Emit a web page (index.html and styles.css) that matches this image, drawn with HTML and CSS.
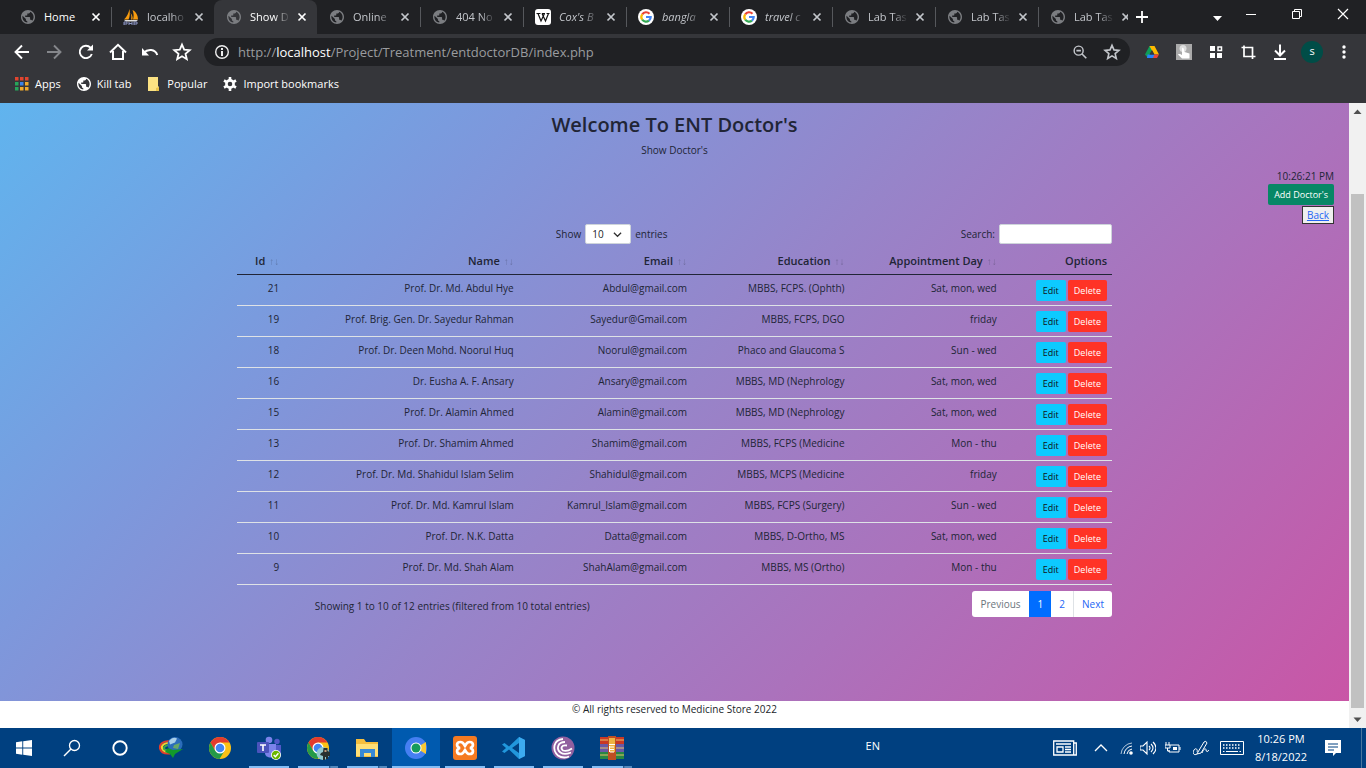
FILE: index.html
```html
<!DOCTYPE html>
<html lang="en">
<head>
<meta charset="utf-8">
<meta name="viewport" content="width=device-width, initial-scale=1">
<title>Show Doctor's</title>
<link rel="stylesheet" href="styles.css">
</head>
<body>
<svg class="sprite" aria-hidden="true">
  <symbol id="globe" viewBox="2 2 20 20"><path fill="currentColor" d="M12 2C6.480 2 2 6.480 2 12s4.480 10 10 10 10-4.480 10-10S17.520 2 12 2zm-1 17.930c-3.950-.490-7-3.850-7-7.930 0-.620.080-1.210.210-1.790L9 15v1c0 1.100.900 2 2 2v1.930zm6.900-2.540c-.260-.810-1-1.390-1.900-1.390h-1v-3c0-.550-.450-1-1-1H8v-2h2c.550 0 1-.450 1-1V7h2c1.100 0 2-.900 2-2v-.410c2.930 1.190 5 4.060 5 7.410 0 2.080-.800 3.970-2.100 5.390z"/></symbol>
  <symbol id="close" viewBox="0 0 10 10"><path d="M1.500 1.500l7 7M8.500 1.500l-7 7" stroke="currentColor" stroke-width="1.700"/></symbol>
  <symbol id="google" viewBox="0 0 16 16"><circle cx="8" cy="8" r="8" fill="#fff"/><g fill="none" stroke-width="2.200"><path d="M4.200 5.300A4.700 4.700 0 0 1 11.500 4.700" stroke="#ea4335"/><path d="M4.200 10.700A4.700 4.700 0 0 1 4.200 5.300" stroke="#fbbc05"/><path d="M11 11.600A4.700 4.700 0 0 1 4.200 10.700" stroke="#34a853"/><path d="M8 8h4.700A4.700 4.700 0 0 1 11 11.600" stroke="#4285f4"/></g></symbol>
  <symbol id="star" viewBox="0 0 20 20"><path d="M10 2.600l2.200 5.100 5.500.5-4.200 3.600 1.300 5.400-4.800-2.900-4.800 2.900 1.300-5.400-4.200-3.600 5.500-.5z" fill="none" stroke="currentColor" stroke-width="1.800"/></symbol>
  <symbol id="chrome" viewBox="0 0 24 24"><circle cx="12" cy="12" r="11" fill="#fbc116"/><path d="M2.500 6.500A11 11 0 0 1 21.500 6.500H12L7.200 14.700z" fill="#e33b2e"/><path d="M2.500 6.500A11 11 0 0 0 11.500 23l5.200-8.500-4.700 2.800-4.800-2.600z" fill="#249a48"/><circle cx="12" cy="12" r="5.500" fill="#fff"/><circle cx="12" cy="12" r="4.300" fill="#4285f4"/></symbol>
</svg>

<header class="browser">
  <nav class="tabs" aria-label="Tabs">
    <div class="tab tab-bright"><svg class="favicon"><use href="#globe"/></svg><a class="tab-title" href="#home">Home</a><button class="tab-close" aria-label="Close Home"><svg><use href="#close"/></svg></button></div>
    <div class="tab tab-divided"><svg class="favicon favicon-large" viewBox="0 0 16 16"><path d="M6.500 0c.5 4 .5 8-1 10.500H1C4 8 5.500 4 6.500 0zM9.500 1c4 2 5.500 6 5.500 9.500h-5c1-3 .8-6-.5-9.500zM7.500 4c1 2 1 4.500.5 6.500h1.500c.5-3-.5-5-2-6.500z" fill="#f89c0e"/><path d="M1 11h14l-2 1.500H3z" fill="#ddd"/><path d="M1 16v-3h3v2H1m5 1v-3m0 1.500h3m0-1.500v3m2 0v-3h3v2h-3" fill="none" stroke="#8c96c4"/></svg><a class="tab-title" href="#db">localho</a><button class="tab-close" aria-label="Close localhost"><svg><use href="#close"/></svg></button></div>
    <div class="tab tab-active tab-bright"><svg class="favicon"><use href="#globe"/></svg><a class="tab-title" href="#show">Show D</a><button class="tab-close" aria-label="Close Show"><svg><use href="#close"/></svg></button></div>
    <div class="tab"><svg class="favicon"><use href="#globe"/></svg><a class="tab-title" href="#online">Online</a><button class="tab-close" aria-label="Close Online"><svg><use href="#close"/></svg></button></div>
    <div class="tab tab-divided"><svg class="favicon"><use href="#globe"/></svg><a class="tab-title" href="#404">404 No</a><button class="tab-close" aria-label="Close 404"><svg><use href="#close"/></svg></button></div>
    <div class="tab tab-divided"><svg class="favicon favicon-large" viewBox="0 0 16 16"><rect width="16" height="16" rx="3" fill="#fff"/><path d="M1.500 4.500h4M7 4.500h3M11.500 4.500h3" stroke="#111"/><path d="M3 4.500l3 7.500 3.500-7.500M7 4.500l3.500 7.500 3-7.500" fill="none" stroke="#111" stroke-width="1.200"/></svg><a class="tab-title tab-italic" href="#cox">Cox's B</a><button class="tab-close" aria-label="Close Cox's"><svg><use href="#close"/></svg></button></div>
    <div class="tab tab-divided"><svg class="favicon favicon-large"><use href="#google"/></svg><a class="tab-title tab-italic" href="#bangla">bangla</a><button class="tab-close" aria-label="Close bangla"><svg><use href="#close"/></svg></button></div>
    <div class="tab tab-divided"><svg class="favicon favicon-large"><use href="#google"/></svg><a class="tab-title tab-italic" href="#travel">travel c</a><button class="tab-close" aria-label="Close travel"><svg><use href="#close"/></svg></button></div>
    <div class="tab tab-divided"><svg class="favicon"><use href="#globe"/></svg><a class="tab-title" href="#lab1">Lab Tas</a><button class="tab-close" aria-label="Close Lab Task"><svg><use href="#close"/></svg></button></div>
    <div class="tab tab-divided"><svg class="favicon"><use href="#globe"/></svg><a class="tab-title" href="#lab2">Lab Tas</a><button class="tab-close" aria-label="Close Lab Task"><svg><use href="#close"/></svg></button></div>
    <div class="tab tab-divided tab-last"><svg class="favicon"><use href="#globe"/></svg><a class="tab-title" href="#lab3">Lab Tas</a><button class="tab-close" aria-label="Close Lab Task"><svg><use href="#close"/></svg></button></div>
    <button class="new-tab" aria-label="New tab"><svg viewBox="0 0 12 12"><path d="M6 0v12M0 6h12" stroke="currentColor" stroke-width="1.800"/></svg></button>
    <div class="window-controls">
      <button class="tab-search" aria-label="Search tabs"><svg viewBox="0 0 16 16"><path d="M4 7h9l-4.500 5z" fill="#fff"/></svg></button>
      <button aria-label="Minimize"><svg viewBox="0 0 16 16"><path d="M3 8.500h10" stroke="#fff"/></svg></button>
      <button aria-label="Restore"><svg viewBox="0 0 16 16"><path d="M3.500 5.500h7v7h-7zM5.500 5.500v-2h7v7h-2" fill="none" stroke="#fff"/></svg></button>
      <button aria-label="Close window"><svg viewBox="0 0 16 16"><path d="M3 3l10 10M13 3L3 13" stroke="#fff" stroke-width="1.200"/></svg></button>
    </div>
  </nav>

  <div class="toolbar">
    <div class="tool-group">
      <button aria-label="Back"><svg viewBox="0 0 20 20"><path d="M17 10H4M10 3.500L3.500 10l6.500 6.500" fill="none" stroke="currentColor" stroke-width="1.900"/></svg></button>
      <button class="dim" aria-label="Forward"><svg viewBox="0 0 20 20"><path d="M3 10h13M10 3.500l6.500 6.500-6.500 6.500" fill="none" stroke="currentColor" stroke-width="1.900"/></svg></button>
      <button aria-label="Reload"><svg viewBox="0 0 20 20"><path d="M15.800 12A6.200 6.200 0 1 1 14.500 5.700L16 7.500" fill="none" stroke="currentColor" stroke-width="1.900"/><path d="M17 2.500v6h-6z" fill="currentColor"/></svg></button>
      <button aria-label="Home"><svg viewBox="0 0 20 20"><path d="M2 10.500L10 2.800l8 7.700M5 9v8h10V9" fill="none" stroke="currentColor" stroke-width="2"/></svg></button>
      <button aria-label="Undo"><svg viewBox="0 0 20 20"><path d="M3.500 11C8 6.500 15 7 17.300 13" fill="none" stroke="currentColor" stroke-width="2"/><path d="M2 6v7.500h7z" fill="currentColor"/></svg></button>
      <button aria-label="Favorites"><svg><use href="#star"/></svg></button>
    </div>
    <div class="address">
      <svg class="info-icon" viewBox="0 0 16 16"><circle cx="8" cy="8" r="6.300" fill="none" stroke="#eee" stroke-width="1.400"/><path d="M8 7v5M8 4v2" stroke="#eee" stroke-width="2"/></svg>
      <a class="url" href="#show">http://<span class="host">localhost</span>/Project/Treatment/entdoctorDB/index.php</a>
      <button aria-label="Zoom"><svg viewBox="0 0 20 20"><circle cx="8.500" cy="8.500" r="5" fill="none" stroke="currentColor" stroke-width="1.600"/><path d="M12 12l5 5M6 8.500h5" stroke="currentColor" stroke-width="1.800"/></svg></button>
      <button aria-label="Bookmark page"><svg><use href="#star"/></svg></button>
    </div>
    <div class="tool-group">
      <button aria-label="Drive"><svg viewBox="0 0 20 20"><path d="M7.500 4h5L6 16l-3-3.500z" fill="#0f9d58"/><path d="M7.500 4h5l4.500 8.500h-5z" fill="#ffba00"/><path d="M5.500 12.500H14L12 16H5z" fill="#2684fc"/><path d="M12.500 12.500H17L15 16h-4z" fill="#ea4335"/><path d="M10 8l-2.500 4.500h5z" fill="#35363a"/></svg></button>
      <button aria-label="Touch extension"><svg viewBox="0 0 20 20"><path d="M2 2h16v16H2z" fill="#aaa"/><circle cx="9" cy="6.500" r="3.500" fill="#ddd"/><path d="M8 6c2-1 2 2 2.500 4l5 1.500v5H8l-4-4c1-1 3 0 4 .5z" fill="#fff"/></svg></button>
      <button aria-label="Extensions"><svg viewBox="0 0 20 20"><path d="M4 4h5v5H4zM4 11h5v5H4zM11 11h5v5h-5z" fill="currentColor"/><path d="M12 5h3.500v3.500H12z" fill="none" stroke="currentColor" stroke-width="1.500"/></svg></button>
      <button aria-label="Crop"><svg viewBox="0 0 20 20"><path d="M3.500 5.500h11v11.500M6 3.500v11h11.500" fill="none" stroke="currentColor" stroke-width="1.700"/></svg></button>
      <button aria-label="Downloads"><svg viewBox="0 0 20 20"><path d="M10 2.500v11M5 8.500l5 5 5-5M4 17h12" fill="none" stroke="currentColor" stroke-width="2"/></svg></button>
      <button aria-label="Profile"><span class="avatar">s</span></button>
      <button aria-label="Menu"><svg viewBox="0 0 20 20"><g fill="currentColor"><circle cx="10" cy="5" r="1.700"/><circle cx="10" cy="10" r="1.700"/><circle cx="10" cy="15" r="1.700"/></g></svg></button>
    </div>
  </div>

  <nav class="bookmarks" aria-label="Bookmarks">
    <a href="#apps"><svg viewBox="0 0 14 14"><path d="M0 0h3.500v3.500H0zM5 0h3.500v3.500H5zM10 0h3.500v3.500H10z" fill="#e2452f"/><path d="M0 5h3.500v3.500H0zM0 10h3.500v3.500H0z" fill="#27a55a"/><path d="M5 5h3.500v3.500H5z" fill="#3b82e8"/><path d="M10 5h3.500v3.500H10zM5 10h3.500v3.500H5zM10 10h3.500v3.500H10z" fill="#f0a92c"/></svg>Apps</a>
    <a href="#kill"><svg><use href="#globe"/></svg>Kill tab</a>
    <a href="#popular"><svg viewBox="0 0 14 14"><path d="M1 0h10v9l1 1v4H1z" fill="#fbe283"/><path d="M9 14v-3l3-1v4z" fill="#e8c34c"/></svg>Popular</a>
    <a href="#import"><svg viewBox="0 0 14 14"><circle cx="7" cy="7" r="3.600" fill="none" stroke="#fff" stroke-width="2.600"/><path d="M7 0v3M7 11v3M1 3.500l2.500 1.400M10.500 9.100L13 10.500M1 10.500l2.500-1.400M10.500 4.900L13 3.500" stroke="#fff" stroke-width="2.600"/></svg>Import bookmarks</a>
  </nav>
</header>

<div class="viewport">
  <div class="page">
    <main class="content">
      <h1>Welcome To ENT Doctor's</h1>
      <p class="subtitle">Show Doctor's</p>
      <div class="actions">
        <time>10:26:21 PM</time>
        <button class="btn btn-add">Add Doctor's</button>
        <a class="back" href="#back">Back</a>
      </div>
      <section class="listing">
        <div class="controls">
          <div class="half length"><label for="length">Show</label><select id="length"><option>10</option><option>25</option></select><span>entries</span></div>
          <div class="half filter"><label for="search">Search:</label><input id="search" type="search"></div>
        </div>
        <table>
          <colgroup><col class="col-id"><col class="col-name"><col class="col-email"><col class="col-education"><col class="col-day"><col class="col-options"></colgroup>
          <thead><tr><th>Id<span class="sort">↑↓</span></th><th>Name<span class="sort">↑↓</span></th><th>Email<span class="sort">↑↓</span></th><th>Education<span class="sort">↑↓</span></th><th>Appointment Day<span class="sort">↑↓</span></th><th>Options</th></tr></thead>
          <tbody>
            <tr><td>21</td><td>Prof. Dr. Md. Abdul Hye</td><td>Abdul@gmail.com</td><td>MBBS, FCPS. (Ophth)</td><td>Sat, mon, wed</td><td><div class="options"><button class="btn btn-edit">Edit</button><button class="btn btn-delete">Delete</button></div></td></tr>
            <tr><td>19</td><td>Prof. Brig. Gen. Dr. Sayedur Rahman</td><td>Sayedur@Gmail.com</td><td>MBBS, FCPS, DGO</td><td>friday</td><td><div class="options"><button class="btn btn-edit">Edit</button><button class="btn btn-delete">Delete</button></div></td></tr>
            <tr><td>18</td><td>Prof. Dr. Deen Mohd. Noorul Huq</td><td>Noorul@gmail.com</td><td>Phaco and Glaucoma S</td><td>Sun - wed</td><td><div class="options"><button class="btn btn-edit">Edit</button><button class="btn btn-delete">Delete</button></div></td></tr>
            <tr><td>16</td><td>Dr. Eusha A. F. Ansary</td><td>Ansary@gmail.com</td><td>MBBS, MD (Nephrology</td><td>Sat, mon, wed</td><td><div class="options"><button class="btn btn-edit">Edit</button><button class="btn btn-delete">Delete</button></div></td></tr>
            <tr><td>15</td><td>Prof. Dr. Alamin Ahmed</td><td>Alamin@gmail.com</td><td>MBBS, MD (Nephrology</td><td>Sat, mon, wed</td><td><div class="options"><button class="btn btn-edit">Edit</button><button class="btn btn-delete">Delete</button></div></td></tr>
            <tr><td>13</td><td>Prof. Dr. Shamim Ahmed</td><td>Shamim@gmail.com</td><td>MBBS, FCPS (Medicine</td><td>Mon - thu</td><td><div class="options"><button class="btn btn-edit">Edit</button><button class="btn btn-delete">Delete</button></div></td></tr>
            <tr><td>12</td><td>Prof. Dr. Md. Shahidul Islam Selim</td><td>Shahidul@gmail.com</td><td>MBBS, MCPS (Medicine</td><td>friday</td><td><div class="options"><button class="btn btn-edit">Edit</button><button class="btn btn-delete">Delete</button></div></td></tr>
            <tr><td>11</td><td>Prof. Dr. Md. Kamrul Islam</td><td>Kamrul_Islam@gmail.com</td><td>MBBS, FCPS (Surgery)</td><td>Sun - wed</td><td><div class="options"><button class="btn btn-edit">Edit</button><button class="btn btn-delete">Delete</button></div></td></tr>
            <tr><td>10</td><td>Prof. Dr. N.K. Datta</td><td>Datta@gmail.com</td><td>MBBS, D-Ortho, MS</td><td>Sat, mon, wed</td><td><div class="options"><button class="btn btn-edit">Edit</button><button class="btn btn-delete">Delete</button></div></td></tr>
            <tr><td>9</td><td>Prof. Dr. Md. Shah Alam</td><td>ShahAlam@gmail.com</td><td>MBBS, MS (Ortho)</td><td>Mon - thu</td><td><div class="options"><button class="btn btn-edit">Edit</button><button class="btn btn-delete">Delete</button></div></td></tr>
          </tbody>
        </table>
        <div class="table-footer">
          <p class="half info">Showing 1 to 10 of 12 entries (filtered from 10 total entries)</p>
          <nav class="half pager" aria-label="Pages"><div class="pages"><a class="disabled" href="#prev">Previous</a><a class="current" href="#p1">1</a><a href="#p2">2</a><a href="#next">Next</a></div></nav>
        </div>
      </section>
    </main>
    <footer class="copyright">© All rights reserved to Medicine Store 2022</footer>
  </div>
  <div class="scrollbar" aria-hidden="true">
    <svg viewBox="0 0 17 17"><path d="M4.500 11h8l-4-4.500z" fill="#505050"/></svg>
    <div class="thumb"></div>
    <svg viewBox="0 0 17 17"><path d="M4.500 6.500h8l-4 4.500z" fill="#505050"/></svg>
  </div>
</div>

<footer class="taskbar">
  <div class="launchers">
    <button aria-label="Start"><svg viewBox="0 0 24 24"><path d="M4 6.300l6.300-1v6.200H4zM11.200 5.200L20 4v7.500h-8.800zM4 12.500h6.300v6.300L4 17.800zM11.200 12.500H20V20l-8.800-1.200z" fill="#fff"/></svg></button>
    <button aria-label="Search"><svg viewBox="0 0 24 24"><circle cx="14.500" cy="9.500" r="5" fill="none" stroke="#fff" stroke-width="1.300"/><path d="M11 13l-7 7" stroke="#fff" stroke-width="1.400"/></svg></button>
    <button aria-label="Cortana"><svg viewBox="0 0 24 24"><circle cx="12" cy="12" r="6.700" fill="none" stroke="#fff" stroke-width="1.900"/></svg></button>
  </div>
  <div class="launchers apps">
    <button aria-label="Download manager"><svg viewBox="0 0 24 24"><path d="M12 5.500C5 4 0 8 1 12.500c1 4 5 5.500 10 5" fill="none" stroke="#e33c2b" stroke-width="2"/><path d="M12 7.200C6 6 2 9.500 3 12.500c1 3 4 3.500 8 3.500" fill="none" stroke="#f5d22d" stroke-width="2"/><path d="M12 9C8 8.500 4.500 10.500 5 12.500c.5 2 3 2 6 2" fill="none" stroke="#3aa64a" stroke-width="2"/><circle cx="16" cy="8.500" r="7.500" fill="#2b6cba"/><path d="M10 5c3-4 6-3.500 8-2.500l-2 4-5 2z" fill="#a9cfe8"/><path d="M15 9l6-2-2 6-5-1z" fill="#67a866"/><path d="M9 12l5 2 10-1-8 5-2 4-3-4-5-2z" fill="#129a2a"/></svg></button>
    <button aria-label="Chrome"><svg><use href="#chrome"/></svg></button>
    <button class="running" aria-label="Teams"><svg viewBox="0 0 24 24"><circle cx="12" cy="4" r="3.300" fill="#7b83eb"/><circle cx="20" cy="5.500" r="2.700" fill="#5059c9"/><path d="M16 9h8v7c0 3-4 5-8 3z" fill="#5059c9"/><path d="M8 8h11v9c0 6-11 6-11 0z" fill="#7b83eb"/><rect y="6" width="12" height="11" rx="1" fill="#4b53bc"/><path d="M3 9h6M6 9v6" stroke="#fff" stroke-width="1.600"/><circle cx="19" cy="19" r="5" fill="#fff"/><circle cx="19" cy="19" r="4.200" fill="#6bb700"/><path d="M16.700 19l1.700 1.800 3-3.600" fill="none" stroke="#fff" stroke-width="1.400"/></svg></button>
    <button class="running stacked" aria-label="Chrome profile"><svg viewBox="0 0 24 24"><use href="#chrome"/><circle cx="17" cy="17.500" r="6.500" fill="#92c9cf"/><path d="M17.500 12h4v3l2.500 1v4h-2v3h-2v-2h-1v3h-2v-4l-3-1 1-2 2-1z" fill="#28302f"/><path d="M18.500 14h2v2h-2z" fill="#c49a7a"/></svg></button>
    <button class="running stacked" aria-label="File Explorer"><svg viewBox="0 0 24 24"><path d="M1 3h8l2 3h12v15H1z" fill="#f5be3e"/><path d="M1 8h22v12H1z" fill="#ffdf76"/><path d="M5 13h15v8h-4v-4H9v4H5z" fill="#3889d6"/></svg></button>
    <button class="running focused" aria-label="Browser"><svg viewBox="0 0 24 24"><circle cx="12" cy="12" r="11" fill="#457ff2"/><path d="M12 12l10-6v12z" fill="#f8c834"/><circle cx="12" cy="12" r="5.500" fill="#fff"/><circle cx="12" cy="12" r="4.500" fill="#159b5d"/></svg></button>
    <button class="running" aria-label="XAMPP"><svg viewBox="0 0 24 24"><rect width="24" height="24" rx="3" fill="#f57a21"/><path d="M7.500 6C3 6 3 11 7 12c-4 1-4 6 .5 6 3 0 3-2 4.500-4 1.500 2 1.500 4 4.500 4 4.500 0 4.500-5 .5-6 4-1 4-6-.5-6-3 0-3 2-4.500 4-1.500-2-1.500-4-4.500-4z" fill="none" stroke="#fff" stroke-width="2.700"/></svg></button>
    <button class="running" aria-label="Visual Studio Code"><svg viewBox="0 0 24 24"><path d="M17 1l6 3v16l-6 3L7 13.500 2.500 17 0 15.500 4 12 0 8.500 2.500 7 7 10.500zM17 7l-7 5 7 5z" fill="#2197dc" fill-rule="evenodd"/><path d="M17 1l6 3v16l-6 3z" fill="#3cabf0"/></svg></button>
    <button class="running" aria-label="BitTorrent"><svg viewBox="0 0 24 24"><circle cx="12" cy="12" r="11.500" fill="#91609f"/><g fill="none" stroke="#fff" stroke-width="1.800"><path d="M12 3C2 4 1 14 7 19.500c4 3 9 2 11 1"/><path d="M14 6C6.500 6 5 13 9.500 16.500c4 3 8 1 10.500 0"/><path d="M16 9.500c-6-1-6.500 3-4 5 3 1 6 0 9-2"/></g></svg></button>
    <button class="running stacked" aria-label="WinRAR"><svg viewBox="0 0 24 24"><path d="M0 1h24v7H0z" fill="#c93824"/><path d="M0 8h24v8H0z" fill="#6958a5"/><path d="M0 16h24v7H0z" fill="#288743"/><path d="M0 4h24M0 12h24M0 19h24" stroke="#e5c16a"/><path d="M8 0h8v24H8z" fill="#bd4f22"/><path d="M9 2h6v14H9z" fill="#eeb343"/><path d="M9 8.500h6M10 11h4M10 13.500h4M10 16h4M9.500 10v6" stroke="#fff"/></svg></button>
  </div>
  <span class="language">EN</span>
  <div class="tray">
    <button class="tray-news" aria-label="News"><svg viewBox="0 0 24 18"><path d="M.7 2h20v14H.7zM20.700 4h2.600v12h-3M3 5h15M4 8h6v5H4zM12 8h6M12 10.500h6M12 13h6" fill="none" stroke="#fff" stroke-width="1.300"/></svg></button>
    <button class="tray-wide" aria-label="Hidden icons"><svg viewBox="0 0 16 16"><path d="M2 11l6-6 6 6" fill="none" stroke="#fff" stroke-width="1.300"/></svg></button>
    <button class="tray-small" aria-label="Wi-Fi"><svg viewBox="0 0 16 16"><g fill="none" stroke="#fff"><path d="M3 14A12 12 0 0 1 14 3" opacity=".7"/><path d="M6 14A9 9 0 0 1 14 6"/><path d="M9 14A6 6 0 0 1 14 9"/></g><circle cx="13" cy="13" r="1.800" fill="#fff"/></svg></button>
    <button class="tray-small" aria-label="Volume"><svg viewBox="0 0 16 16"><path d="M0 6h3l4-4v12l-4-4H0zM9 6q2 2 0 4M11 4q4 4 0 8M13 2q6 6 0 12" fill="none" stroke="#fff" stroke-width="1.100"/></svg></button>
    <button class="tray-wide" aria-label="Battery"><svg viewBox="0 0 16 16"><path d="M5 5h9v7H4v-2M15 7v3M1 2v3M4 2v3M0 5h5v3H0zM2.500 8v3H5" fill="none" stroke="#fff"/><path d="M8 7h4v3H8z" fill="#fff"/></svg></button>
    <button class="tray-wide" aria-label="Pen"><svg viewBox="0 0 16 16"><path d="M4 14C1 16-1 13 1 10s4 0 3 2M5 12L11 2q2-2 3 1L8 13l-4 1zM9 13c2-5 4-5 4-3s2 2 3 0" fill="none" stroke="#fff"/></svg></button>
    <button class="tray-keyboard" aria-label="Keyboard"><svg viewBox="0 0 24 14"><path d="M.5.500h23v13H.500z" fill="none" stroke="#fff"/><path d="M3 4h18M3 7h18" stroke="#fff" stroke-width="1.500" stroke-dasharray="1.500 1.500"/><path d="M6 10.500h12M3 10.500h1.500M19.500 10.500H21" stroke="#fff"/></svg></button>
    <time class="clock">10:26 PM<br>8/18/2022</time>
    <button class="tray-notice" aria-label="Notifications"><svg viewBox="0 0 16 16"><path d="M0 0h16v13h-5l-3 3v-3H0z" fill="#fff"/><path d="M3 4h10M3 7h10M3 10h6" stroke="#004080"/></svg></button>
  </div>
</footer>
</body>
</html>
```
FILE: styles.css
```css
* { box-sizing: border-box; }

body {
  display: flex;
  flex-direction: column;
  height: 100vh;
  margin: 0;
  overflow: hidden;
  color: #212536;
  font-family: "Open Sans", "Noto Sans", sans-serif;
  font-size: 11px;
  line-height: 16px;
}

button, input, select { font: inherit; }
button { padding: 0; border: 0; background: none; color: inherit; }
a { color: inherit; text-decoration: none; }
h1, p { margin: 0; }
svg { display: block; flex: none; }
.sprite { position: absolute; width: 0; height: 0; }

/* Browser frame */
.browser { flex: none; background: #35363a; color: #fff; }
.tabs { display: flex; height: 34px; padding-left: 8px; background: #202124; }
.tab {
  position: relative;
  display: flex;
  flex: 0 1 103px;
  align-items: center;
  min-width: 0;
  padding-left: 13px;
  color: #c3c6cb;
}
.tab-bright { color: #fff; }
.tab-active { border-radius: 8px 8px 0 0; background: #35363a; }
.tab-divided::before {
  content: "";
  position: absolute;
  left: 0;
  width: 1px;
  height: 20px;
  background: #56585c;
}
.tab-last { flex-basis: 90px; overflow: hidden; }
.favicon { width: 14px; height: 14px; margin-right: 9px; color: #7b7d81; }
.favicon-large { width: 16px; height: 16px; margin-right: 8px; margin-left: -1px; }
.tab-title {
  flex: none;
  width: 40px;
  white-space: nowrap;
  -webkit-mask-image: linear-gradient(90deg, #000 60%, transparent);
  mask-image: linear-gradient(90deg, #000 60%, transparent);
}
.tab-bright:first-child .tab-title { -webkit-mask-image: none; mask-image: none; }
.tab-italic { font-style: italic; }
.tab-close { flex: none; margin-left: 7px; }
.tab-close svg { width: 10px; height: 10px; }
.new-tab { margin-left: 8px; }
.new-tab svg { width: 12px; height: 12px; }
.window-controls { display: flex; align-items: center; margin-left: auto; padding-bottom: 6px; }
.window-controls button { display: grid; width: 46px; place-items: center; }
.window-controls .tab-search { width: 22px; padding-top: 6px; }
.window-controls svg { width: 16px; height: 16px; }

.toolbar { display: flex; gap: 6px; align-items: center; height: 36px; padding: 0 6px; }
.tool-group { display: flex; }
.tool-group button { display: grid; width: 32px; height: 32px; place-items: center; }
.tool-group svg { width: 20px; height: 20px; }
.tool-group .dim { color: #85878b; }
.address {
  display: flex;
  flex: 1;
  align-items: center;
  height: 28px;
  padding: 0 8px 0 10px;
  border-radius: 14px;
  background: #202124;
}
.info-icon { width: 16px; height: 16px; margin-right: 8px; }
.url { flex: 1; color: #9a9c9f; font-size: 13px; }
.host { color: #fff; }
.address button { margin-left: 12px; color: #c3c6cb; }
.address button svg { width: 20px; height: 18px; }
.avatar { width: 22px; height: 22px; border-radius: 11px; background: #004d47; line-height: 20px; }
.bookmarks { display: flex; gap: 16px; align-items: center; height: 33px; padding: 0 15px 5px; }
.bookmarks a { display: flex; gap: 6px; align-items: center; }
.bookmarks svg { width: 14px; height: 14px; }

/* Doctor list */
.viewport { display: flex; flex: 1; min-height: 0; }
.page { display: flex; flex: 1; flex-direction: column; min-width: 0; background: #fff; font-size: 10px; }
.content {
  flex: 1;
  padding-top: 9px;
  background: linear-gradient(135deg, #60b4ee 0%, #7d98dc 27%, #9784c9 50%, #ab72bc 70%, #c956a6 100%);
}
h1 { font-size: 20px; font-weight: 600; line-height: 26px; text-align: center; }
.subtitle { padding-top: 4px; text-align: center; }
.actions { display: flex; flex-direction: column; align-items: flex-end; padding: 10px 15px 0; }
.btn {
  height: 21px;
  padding: 0 6px;
  border-radius: 2px;
  font-size: 9px;
}
.btn-add { background: #078766; color: #fff; }
.back {
  margin-top: 1px;
  padding: 0 4px;
  border: 1px solid #333;
  background: #efefef;
  color: #2465f5;
  text-decoration: underline;
}
.listing { padding: 0 237px; }
.controls, .table-footer { display: flex; }
.half { width: 50%; }
.length, .filter { display: flex; gap: 4px; align-items: center; justify-content: flex-end; height: 20px; }
.length { padding-right: 7px; }
select {
  width: 46px;
  height: 20px;
  padding: 0 6px;
  border: 1px solid #ced4da;
  border-radius: 2px;
  appearance: none;
  background: #fff url("data:image/svg+xml,%3Csvg xmlns='http://www.w3.org/2000/svg' viewBox='0 0 10 10'%3E%3Cpath d='M1 3l4 4 4-4' fill='none' stroke='%23333' stroke-width='1.400'/%3E%3C/svg%3E") no-repeat right 8px center / 9px;
  color: #212529;
}
input { width: 113px; height: 20px; border: 1px solid #ced4da; border-radius: 2px; background: #fff; }
table { width: 100%; margin-top: 4px; border-collapse: separate; border-spacing: 0; table-layout: fixed; text-align: right; }
.col-id { width: 5.4%; }
.col-name { width: 26.8%; }
.col-email { width: 19.8%; }
.col-education { width: 18%; }
.col-day { width: 17.4%; }
.col-options { width: 12.6%; }
th, td { padding: 5px 5px 4px; vertical-align: top; white-space: nowrap; }
th { border-bottom: 1px solid #212536; font-size: 11px; font-weight: 600; line-height: 16px; }
td { border-bottom: 1px solid #dee2e6; }
.sort { margin-left: 4px; opacity: .3; font-family: "Liberation Sans", sans-serif; font-size: 10px; }
.options { display: flex; gap: 2px; justify-content: flex-end; }
.btn-edit { min-width: 30px; background: #0dcaff; color: #111; }
.btn-delete { background: #ff3326; color: #fff; }
.table-footer { align-items: center; padding-top: 6px; }
.info { padding: 4px 7px 0 0; text-align: center; }
.pager { display: flex; justify-content: flex-end; }
.pages { display: flex; border-radius: 3px; overflow: hidden; background: #fff; color: #2465f5; line-height: 26px; }
.pages a { padding: 0 8px; border-left: 1px solid #dee2e6; }
.pages .disabled { border-left: 0; color: #6c757d; }
.pages .current { border-color: #006dff; background: #006dff; color: #fff; }
.pages .current + a { border-left: 0; }
.copyright { height: 27px; color: #212529; text-align: center; }

.scrollbar { display: flex; flex-direction: column; width: 17px; background: #f1f1f1; }
.scrollbar svg { width: 17px; height: 17px; }
.thumb { flex: 1; margin: 74px 2px 3px; background: #c1c1c1; }

/* Taskbar */
.taskbar { display: flex; flex: none; height: 40px; background: #004080; color: #fff; }
.launchers { display: flex; }
.launchers button { position: relative; display: grid; width: 48px; place-items: center; }
.launchers svg { width: 24px; height: 24px; }
.apps { gap: 1px; margin-left: 3px; }
.running::after { content: ""; position: absolute; right: 4px; bottom: 0; left: 4px; height: 2px; background: #83bdf5; }
.stacked::after { background: linear-gradient(90deg, #83bdf5 31px, #1c4d80 31px, #5288bd 33px); }
.focused { background: #005aaf; }
.focused::after { right: 0; left: 0; }
.language { margin: 10px 0 0 auto; }
.tray { display: flex; align-items: center; margin-right: 4px; margin-left: 173px; border-right: 1px solid #48779f; }
.tray button { display: grid; height: 40px; place-items: center; }
.tray-news { width: 24px; margin-right: 10px; }
.tray-news svg { width: 24px; height: 18px; }
.tray-small { width: 22px; }
.tray-small svg, .tray-wide svg, .tray-notice svg { width: 16px; height: 16px; }
.tray-wide { width: 28px; }
.tray-keyboard { width: 34px; }
.tray-keyboard svg { width: 24px; height: 14px; }
.clock { width: 64px; line-height: 18px; text-align: center; }
.tray-notice { width: 40px; margin-right: 8px; }
```
